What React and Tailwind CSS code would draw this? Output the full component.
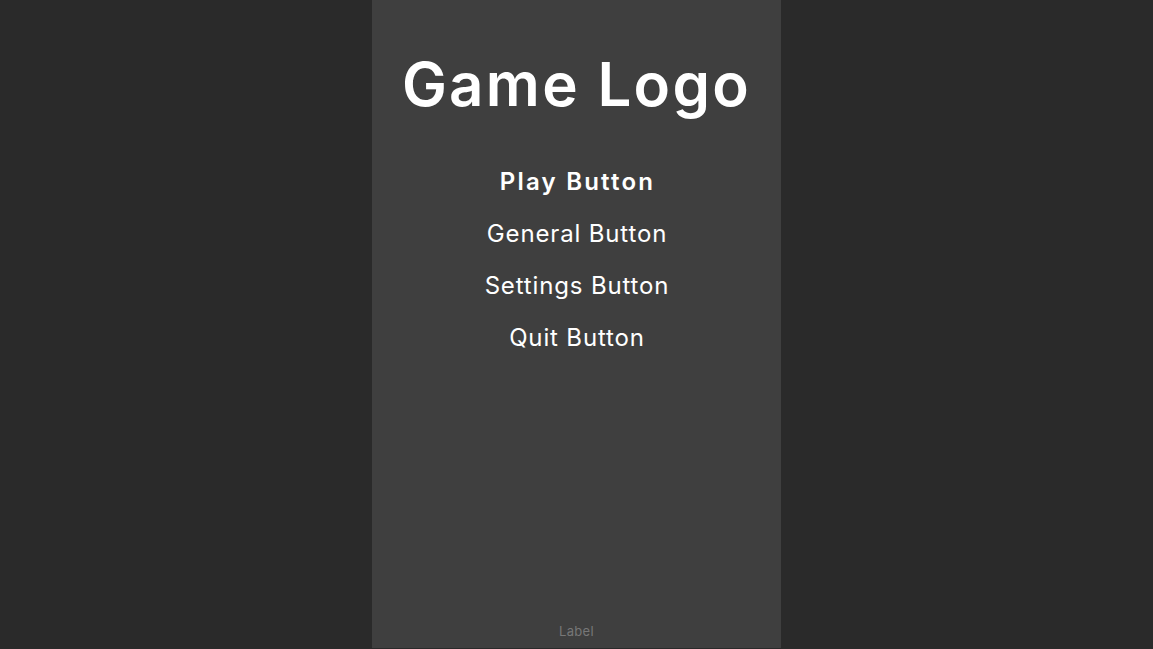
import React from 'react';

const buttons = [
    { label: 'Play Button', bold: true },
    { label: 'General Button' },
    { label: 'Settings Button' },
    { label: 'Quit Button' },
];

const App = () => {
    return (
        <div className="h-[649px] w-full bg-[#2a2a2a] flex justify-center" style={{ fontFamily: 'Inter, "Noto Sans", sans-serif' }}>
            <div className="w-[409px] h-[648px] bg-[#3f3f3f] flex flex-col items-center text-white">
                <h1 className="mt-12 text-[60px] leading-[72px] font-semibold tracking-[2.3px]">Game Logo</h1>
                <nav className="mt-[36px] flex flex-col items-center">
                    {buttons.map((b) => (
                        <button
                            key={b.label}
                            className={`text-[24px] leading-[52px] ${b.bold ? 'font-semibold tracking-[2.2px] pl-[2px]' : 'font-normal tracking-[0.85px] pl-[1px]'}`}
                        >
                            {b.label}
                        </button>
                    ))}
                </nav>
                <span className="mt-auto mb-[7px] text-[13px] leading-[20px] tracking-[0.3px] text-[#777777]">Label</span>
            </div>
        </div>
    );
};

export default App;
